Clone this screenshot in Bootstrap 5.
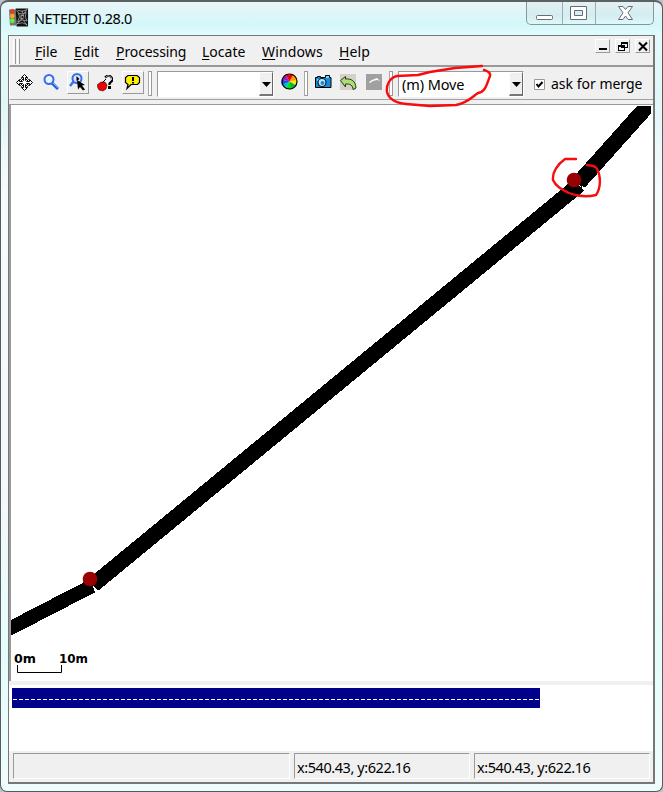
<!DOCTYPE html>
<html lang="en">
<head>
<meta charset="utf-8">
<meta name="viewport" content="width=device-width, initial-scale=1">
<title>NETEDIT 0.28.0</title>
<link href="https://cdn.jsdelivr.net/npm/bootstrap@5.3.0/dist/css/bootstrap.min.css" rel="stylesheet">
<style>
body{background:#b9c4c8;font-family:"Noto Sans","Open Sans",sans-serif;font-size:14px;line-height:20px;color:#000;overflow:hidden}
svg{display:block;flex:none}
.window{width:663px;height:792px;border:1px solid #555b5e;border-top:2px solid #5c6164;border-radius:8px 8px 7px 7px;padding:0 7px 7px;background:linear-gradient(180deg,#e9f6f8 0,#dff5f8 12px,#d3f8fb 22px,#e4fafa 34px,#e2f6f8 100px,#f6fbfc 190px,#f4f8fa 500px,#e6fdfc 650px,#effcfc 100%)}
.titlebar{height:33px}
.appicon{margin:6px 0 0 1px}
.apptitle{margin:6px 0 0 5px;font-size:14.5px;letter-spacing:-.4px}
.fit{display:inline-block;white-space:nowrap}
.winctl{height:23px;width:128px;border:1px solid #86979b;border-top:0;border-radius:0 0 5px 5px;background:linear-gradient(#e4f0f2,#d3edf0 60%,#dff8fa);margin-right:1px}
.winctl>span{height:22px}
.winctl>span+span{border-left:1px solid #9caeb2}
.client{height:749px;border:1px solid #747879;border-right:2px solid #777;border-bottom:2px solid #777;background:#f0f0f0}
.menubar{height:31px;border-bottom:2px solid #999;border-left:1px solid #fff}
.menubar u{text-underline-offset:2px;text-decoration-thickness:1px}
.tools{height:33px;border-left:1px solid #fff;border-bottom:1px solid #a0a0a0}
.bar{width:4px;height:25px;border:1px solid #999;border-left-color:#aaa;background:#fff;flex:none}
.bar-m{width:3px;border:0;border-left:1px solid #fff;border-right:1px solid #999;background:#f0f0f0;height:25px}
.raised{border:1px solid #fff;border-right-color:#999;border-bottom-color:#999;background:#f0f0f0;flex:none}
.tb{width:22px;height:23px}
.combo{height:26px;border:1px solid #999;border-right-color:#fff;border-bottom-color:#fff;background:#fff;flex:none}
.combo .raised{width:14px;height:24px;border-right-color:#666;border-bottom:2px solid #777}
.mode{padding:2px 0 0 3px;font-size:14.5px;letter-spacing:-.1px}
.view{height:577px;border-top:1px solid #999;border-left:2px solid #999;background:#fff}
.msg{height:66px;background:#fff;margin-top:4px;padding:3px 0 0 3px}
.sel{width:528px;height:20px;background:#00008b}
.status{height:29px}
.pane{height:26px;border:1px solid #999;border-right-color:#fff;border-bottom-color:#fff;flex:none}
.coord{font-size:14.5px;letter-spacing:-.43px}
.ink{left:0;top:0;pointer-events:none}
</style>
<script src="https://cdn.jsdelivr.net/npm/bootstrap@5.3.0/dist/js/bootstrap.bundle.min.js"></script>
</head>
<body>
<main class="window position-relative">
 <header class="titlebar d-flex">
  <svg class="appicon" width="20" height="20" viewBox="0 0 21 20">
   <path fill="#777" d="M0 1h8v17H1z"/><path fill="#111" d="M7 0h13v19H8z"/>
   <circle cx="3.500" cy="3" r="2.400" fill="#f4351f"/><circle cx="3.500" cy="8" r="2.400" fill="#ffa51d"/><circle cx="3.500" cy="13" r="2.500" fill="#69ed35"/>
   <path fill="none" stroke="#aaa" stroke-width=".8" d="M8 2l3 4M19 1l-4 5M8 17l4-5M19 18l-4-6M14 2v4M10 5l4 1 4-2-1 5 2 4-5-1-5 2 2-5zM9 2l5 1 5-2M8 16l6-1 5 2"/>
   <path fill="#999" d="M12 7l4-1-1 5-3 1z"/><circle cx="14" cy="9" r="1" fill="#111"/>
  </svg>
  <span class="fit apptitle">NETEDIT 0.28.0</span>
  <div class="winctl d-flex ms-auto">
   <span style="width:35px"><svg width="34" height="22"><rect x="9.500" y="13.500" width="16" height="4" rx="1" fill="#fff" stroke="#676c78"/></svg></span>
   <span style="width:33px"><svg width="32" height="22"><path fill="#fff" fill-rule="evenodd" stroke="#676c78" d="M7.500 4.500h16v13h-16zM11.500 8.500h8v5h-8z"/></svg></span>
   <span class="flex-fill"><svg width="57" height="22"><path fill="#fff" stroke="#676c78" stroke-linejoin="round" d="M22.500 4.500h4.500l2.500 3 2.500-3h4.500l-4.500 6.300 4.500 6.700h-4.500l-2.500-3.500-2.500 3.500h-4.500l4.500-6.700z"/></svg></span>
  </div>
 </header>
 <section class="client">
  <nav class="menubar d-flex">
   <span class="bar-m" style="margin:3px 0 0 3px"></span><span class="bar-m" style="margin:3px 0 0 1px"></span>
   <div class="d-flex" style="padding:6px 0 0 15px">
    <span class="fit" style="width:39px"><u>F</u>ile</span><span class="fit" style="width:42px"><u>E</u>dit</span><span class="fit" style="width:86px;letter-spacing:-.1px"><u>P</u>rocessing</span><span class="fit" style="width:60px"><u>L</u>ocate</span><span class="fit" style="width:77px;letter-spacing:.15px"><u>W</u>indows</span><span class="fit" style="letter-spacing:.15px"><u>H</u>elp</span>
   </div>
   <div class="d-flex align-items-start ms-auto" style="gap:5px;padding:3px 3px 0 0">
    <span class="raised"><svg width="13" height="12"><path d="M3 8h8v2H3z"/></svg></span>
    <span class="raised"><svg width="13" height="12" shape-rendering="crispEdges"><path fill="#f0f0f0" stroke="#000" d="M5.500 2.500h6v5h-6zM2.500 5.500h6v5h-6z"/><path d="M5 2h7v2H5zM2 5h7v2H2z"/></svg></span>
    <span class="raised"><svg width="13" height="12"><path d="M3 2.500l8 8M11 2.500l-8 8" stroke="#000" stroke-width="2"/></svg></span>
   </div>
  </nav>
  <div class="tools d-flex align-items-start">
   <svg style="margin:7px 0 0 6px" width="17" height="17" viewBox="0 0 17 17"><path fill="#fff" stroke="#000" d="M8.500.5l3 3h-2v3l2-2 1 1-2 2h3v-2l3 3-3 3v-2h-3l2 2-1 1-2-2v3h2l-3 3-3-3h2v-3l-2 2-1-1 2-2h-3v2l-3-3 3-3v2h3l-2-2 1-1 2 2v-3h-2z"/></svg>
   <svg style="margin:7px 0 0 10px" width="17" height="17" viewBox="0 0 17 17"><path d="M9 9l6 6" stroke="#2358df" stroke-width="3"/><path d="M10 9l6 6" stroke="#6cc1ff"/><circle cx="6" cy="5.500" r="4.500" fill="#e4f0fa" stroke="#386bf0" stroke-width="2"/><path d="M3 6l4-4M5 8l4-4" stroke="#fff"/></svg>
   <span class="raised tb" style="margin:4px 0 0 7px"><svg width="20" height="21"><path d="M6 9l-4 5" stroke="#3478e6" stroke-width="2.500"/><circle cx="9" cy="6.500" r="4.500" fill="#dbe9fb" stroke="#386bf0" stroke-width="2"/><path d="M8.500 4l3 3-3 2z"/><path d="M9 8l8 5-3 .500 3 4-2 1-3-3.500-2 2.500z"/></svg></span>
   <svg style="margin:8px 0 0 8px" width="16" height="17" viewBox="0 0 16 17"><path d="M8 2.500l2-1.500h3l2 2v3l-2.500 2.500V10" fill="none" stroke="#000" stroke-width="2.200"/><path d="M8.500 2.500l2-1.500h2l2 2v2" fill="none" stroke="#fff" stroke-width=".7"/><path d="M11 11h3v3h-3z"/><path fill="#f10000" stroke="#000" stroke-width=".5" d="M.5 9.500L4 7h4l2 3-1 4-3 2-4-1-1.500-3z"/><path d="M5 8l4-4" stroke="#000"/></svg>
   <span class="raised tb" style="margin:4px 0 0 9px"><svg width="20" height="20"><path fill="#fff200" stroke="#000" stroke-width="1.200" d="M5 3.500h9l2.500 2v5l-2 2H8l-4 4 1-4-2.500-2v-5z"/><path d="M9 5h2v4H9zM9 10h2v1.500H9z"/></svg></span>
   <span class="bar" style="margin:4px 0 0 4px"></span>
   <div class="combo d-flex justify-content-end" style="width:117px;margin:4px 0 0 5px"><span class="raised"><svg width="12" height="22"><path d="M2 9h9l-4.500 5z"/></svg></span></div>
   <svg style="margin:6px 0 0 7px" width="17" height="17" viewBox="-8.500 -8.500 17 17"><path fill="#e00" d="M0 0L-4-7H4z"/><path fill="#ff9800" d="M0 0L4-7 8-1z"/><path fill="#ffe500" d="M0 0L8-2 7 4z"/><path fill="#0b4" d="M0 0L7 4 1 8z"/><path fill="#0ee000" d="M0 0L2 8-4 7z"/><path fill="#00b7ed" d="M0 0L-4 7-8 2z"/><path fill="#2246e2" d="M0 0L-8 3-8-2z"/><path fill="#9b20b8" d="M0 0L-8-2-4-7z"/><circle r="7.500" fill="none" stroke="#000" stroke-width="1.200"/></svg>
   <span class="bar" style="margin:4px 0 0 6px"></span>
   <svg style="margin:8px 0 0 7px" width="17" height="14" viewBox="0 0 17 14"><path fill="#168cdb" stroke="#000" d="M.5 2.500h2v-1h3v1h5v-2h4v2h1.500v10H.5z"/><path fill="#8cd2ff" d="M2 4h2v2H2zM11 1h3v2h-3z"/><circle cx="7" cy="7.500" r="4" fill="#bfe8ff" stroke="#023" stroke-width="1.200"/><circle cx="7.500" cy="8" r="2" fill="#168cdb"/></svg>
   <svg style="margin:7px 0 0 8px" width="17" height="17" viewBox="0 0 17 17"><path fill="#d4d0c8" d="M0 0h16v16H0z"/><path fill="#b0dd78" stroke="#243d18" d="M.5 6.500l5-4v2.500c6-.5 10 2 10.500 9l-3 1.500c0-4-3-6-7.500-5.500v3z"/></svg>
   <svg style="margin:7px 0 0 9px" width="16" height="16"><path fill="#a0a0a0" d="M0 0h16v16H0z"/><path fill="#fff" d="M3 8l3-2 5-2 3 3-3-1-4 1-3 2z"/></svg>
   <span class="bar" style="margin:4px 0 0 7px"></span>
   <div class="combo d-flex justify-content-between" style="width:126px;margin:4px 0 0 5px"><span class="fit mode">(m) Move</span><span class="raised"><svg width="12" height="22"><path d="M2 9h9l-4.500 5z"/></svg></span></div>
   <svg style="margin:12px 0 0 10px" width="11" height="11"><path fill="#fff" stroke="#999" d="M.5.500h10v10H.5z"/><path d="M2.500 5l2 2.500 4-4.500" fill="none" stroke="#000" stroke-width="2"/></svg>
   <span class="fit" style="margin:7px 0 0 6px">ask for merge</span>
  </div>
  <div style="height:4px"></div>
  <div class="view">
   <svg width="643" height="576" viewBox="11 105 643 576">
    <defs><clipPath id="area"><path d="M11 106h640v575H11z"/></clipPath></defs>
    <g clip-path="url(#area)" fill="none" stroke="#000" shape-rendering="crispEdges"><path stroke-width="14" d="M0 633.500L92 586"/><path stroke-width="15.500" d="M93 585L579 185M579 182.500L655 97.500"/><path stroke="none" fill="#000" d="M86 580l8-2 4 6-6 7zM569 184l8-10 8 8-4 7z"/></g>
    <path d="M93 586l4 6M579 185l5 5" stroke="#fff" shape-rendering="crispEdges" stroke-dasharray="3 1"/>
    <circle cx="90" cy="579" r="7.300" fill="#900"/><circle cx="574" cy="180" r="7.300" fill="#900"/>
    <path d="M17.500 665v7.500h44V665" fill="none" stroke="#000"/>
    <g font-family="DejaVu Sans" font-weight="700" font-size="12"><text x="14" y="663" textLength="22" lengthAdjust="spacingAndGlyphs">0m</text><text x="59" y="663" textLength="29" lengthAdjust="spacingAndGlyphs">10m</text></g>
   </svg>
  </div>
  <div class="msg"><div class="sel"><svg width="528" height="20" shape-rendering="crispEdges"><path d="M1 11.500h527" stroke="#fff" stroke-dasharray="4 2"/></svg></div></div>
  <footer class="status d-flex" style="padding:2px 0 0 4px;gap:4px">
   <span class="pane" style="width:277px"></span>
   <span class="pane" style="width:176px;padding:3px 0 0 2px"><span class="fit coord">x:540.43, y:622.16</span></span>
   <span class="pane" style="width:176px;padding:3px 0 0 2px"><span class="fit coord">x:540.43, y:622.16</span></span>
  </footer>
 </section>
</main>
<svg class="ink position-absolute" width="663" height="220" fill="none" stroke="#f80c0c" stroke-width="2.400" stroke-linecap="round" stroke-linejoin="round"><path d="M482 66L455 68 430 72 418 75 397 76C389 78 386 86 387 92 389 100 396 103 406 104L430 106 456 105C467 103 472 97 478 93 486 92 487 83 490 76 491 72 487 71 484 70M576 159L565 159C558 164 552 172 553 180 556 187 563 190 569 193 579 197 588 197 596 195 601 188 601 176 597 169 595 165 591 166 587 165"/></svg>
</body>
</html>
